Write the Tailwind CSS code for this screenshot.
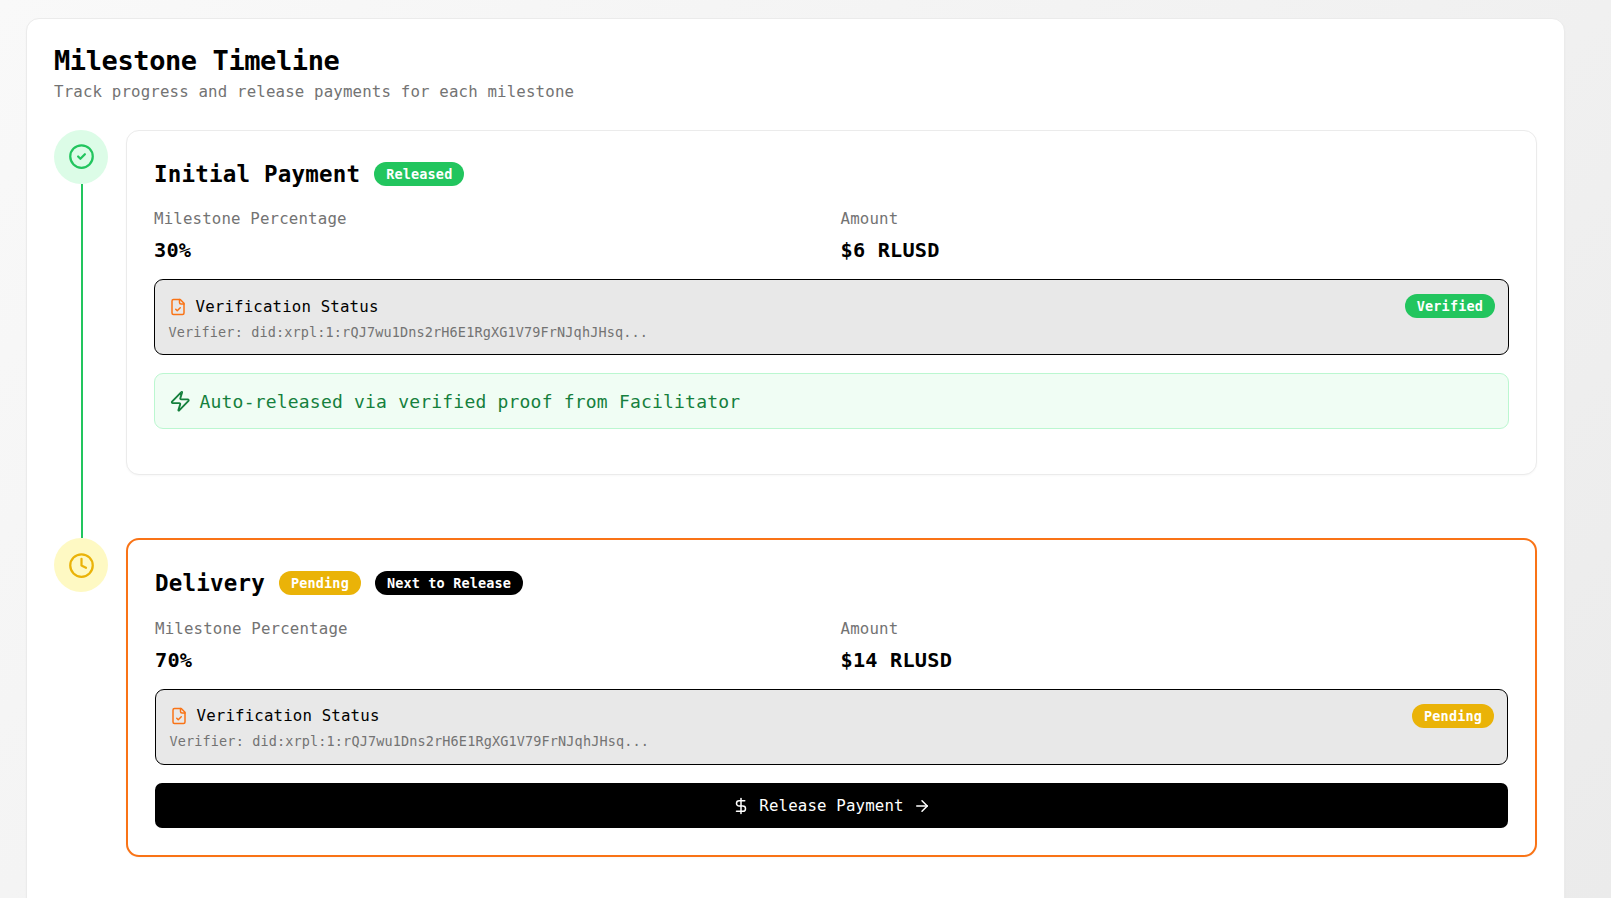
<!DOCTYPE html>
<html lang="en">

<head>
    <meta charset="UTF-8">
    <meta name="viewport" content="width=device-width, initial-scale=1.0">
    <title>Milestone Timeline</title>
    <script src="https://cdn.jsdelivr.net/npm/@tailwindcss/browser@4"></script>
</head>

<body class="h-screen overflow-hidden bg-[linear-gradient(135deg,#f9f9f9,#ebebeb)] font-['DejaVu_Sans_Mono',monospace] text-black">
    <div class="pl-[26px] pr-[46px] pt-[18px]">
        <!-- Outer card -->
        <section class="h-[1000px] rounded-[13px] border border-[#ebebeb] bg-white px-[27px] pt-[25px] shadow-[0_1px_2px_rgba(0,0,0,0.03)]">
            <h1 class="text-[27px] leading-[34px] font-bold tracking-[-0.4px]">Milestone Timeline</h1>
            <p class="mt-[2px] text-[15.75px] leading-[24px] tracking-[0.15px] text-[#737373]">Track progress and release payments for each milestone</p>

            <div class="mt-[26px] flex flex-col">
                <!-- Initial Payment -->
                <div class="flex gap-[18px] pb-[63px]">
                    <div class="flex w-[54px] shrink-0 flex-col items-center">
                        <div class="flex h-[54px] w-[54px] items-center justify-center rounded-full bg-[#dcfce7]">
                            <svg class="-mt-[1px] h-[27px] w-[27px] text-[#22c55e]" viewBox="0 0 24 24" fill="none" stroke="currentColor" stroke-width="2" stroke-linecap="round" stroke-linejoin="round"><circle cx="12" cy="12" r="10"/><path d="m9 12 2 2 4-4"/></svg>
                        </div>
                        <div class="-mb-[63px] ml-[2px] w-[2px] flex-1 bg-[#22c55e]"></div>
                    </div>
                    <div class="min-w-0 flex-1 rounded-[13px] border border-[#ebebeb] bg-white p-[27px] pb-[45px] shadow-[0_1px_2px_rgba(0,0,0,0.03)]">
                        <div class="flex items-center gap-[14px]">
                            <h2 class="text-[22.5px] leading-[32px] font-bold tracking-[0.2px]">Initial Payment</h2>
                            <span class="rounded-full bg-[#22c55e] px-[12px] py-[3px] text-[13.5px] leading-[18px] font-bold tracking-[0.15px] text-white">Released</span>
                        </div>
                        <div class="mt-[17px] grid grid-cols-2 gap-[18px]">
                            <div>
                                <p class="text-[15.75px] leading-[24px] tracking-[0.15px] text-[#737373]">Milestone Percentage</p>
                                <p class="mt-[5px] text-[20.25px] leading-[28px] font-bold tracking-[0.2px]">30%</p>
                            </div>
                            <div>
                                <p class="text-[15.75px] leading-[24px] tracking-[0.15px] text-[#737373]">Amount</p>
                                <p class="mt-[5px] text-[20.25px] leading-[28px] font-bold tracking-[0.2px]">$6 RLUSD</p>
                            </div>
                        </div>
                        <div class="mt-[15px] flex items-start justify-between rounded-[9px] border border-black bg-[#e8e8e8] pt-[15px] pr-[13px] pb-[12px] pl-[13.5px]">
                            <div>
                                <div class="flex items-center gap-[9px]">
                                    <svg class="h-[18px] w-[18px] text-[#f97316]" viewBox="0 0 24 24" fill="none" stroke="currentColor" stroke-width="2" stroke-linecap="round" stroke-linejoin="round"><path d="M15 2H6a2 2 0 0 0-2 2v16a2 2 0 0 0 2 2h12a2 2 0 0 0 2-2V7Z"/><path d="M14 2v4a2 2 0 0 0 2 2h4"/><path d="m9 15 2 2 4-4"/></svg>
                                    <span class="text-[15.75px] leading-[24px] tracking-[0.15px]">Verification Status</span>
                                </div>
                                <p class="mt-[3px] text-[13.5px] leading-[20px] tracking-[0.14px] text-[#737373]">Verifier: did:xrpl:1:rQJ7wu1Dns2rH6E1RgXG1V79FrNJqhJHsq...</p>
                            </div>
                            <span class="-mt-[1px] rounded-full bg-[#22c55e] px-[12px] py-[3px] text-[13.5px] leading-[18px] font-bold tracking-[0.15px] text-white">Verified</span>
                        </div>
                        <div class="mt-[18px] flex h-[56px] items-center gap-[8px] rounded-[9px] border border-[#bbf7d0] bg-[#f0fdf4] pr-[13px] pl-[14px] text-[18px] tracking-[0.2px] text-[#15803d]">
                            <svg class="h-[22.5px] w-[22.5px]" viewBox="0 0 24 24" fill="none" stroke="currentColor" stroke-width="2" stroke-linecap="round" stroke-linejoin="round"><path d="M4 14a1 1 0 0 1-.78-1.63l9.9-10.2a.5.5 0 0 1 .86.46l-1.92 6.02A1 1 0 0 0 13 10h7a1 1 0 0 1 .78 1.63l-9.9 10.2a.5.5 0 0 1-.86-.46l1.92-6.02A1 1 0 0 0 11 14z"/></svg>
                            <span>Auto-released via verified proof from Facilitator</span>
                        </div>
                    </div>
                </div>

                <!-- Delivery -->
                <div class="flex gap-[18px]">
                    <div class="flex w-[54px] shrink-0 flex-col items-center">
                        <div class="flex h-[54px] w-[54px] items-center justify-center rounded-full bg-[#fef9c3]">
                            <svg class="h-[27px] w-[27px] text-[#eab308]" viewBox="0 0 24 24" fill="none" stroke="currentColor" stroke-width="2" stroke-linecap="round" stroke-linejoin="round"><circle cx="12" cy="12" r="10"/><polyline points="12 6 12 12 16 14"/></svg>
                        </div>
                    </div>
                    <div class="min-w-0 flex-1 rounded-[13px] border-2 border-[#f97316] bg-white p-[27px] shadow-[0_1px_2px_rgba(0,0,0,0.03)]">
                        <div class="flex items-center gap-[14px]">
                            <h2 class="text-[22.5px] leading-[32px] font-bold tracking-[0.2px]">Delivery</h2>
                            <span class="rounded-full bg-[#eab308] px-[12px] py-[3px] text-[13.5px] leading-[18px] font-bold tracking-[0.15px] text-white">Pending</span>
                            <span class="rounded-full bg-black px-[12px] py-[3px] text-[13.5px] leading-[18px] font-bold tracking-[0.15px] text-white">Next to Release</span>
                        </div>
                        <div class="mt-[18px] grid grid-cols-2 gap-[18px]">
                            <div>
                                <p class="text-[15.75px] leading-[24px] tracking-[0.15px] text-[#737373]">Milestone Percentage</p>
                                <p class="mt-[5px] text-[20.25px] leading-[28px] font-bold tracking-[0.2px]">70%</p>
                            </div>
                            <div>
                                <p class="text-[15.75px] leading-[24px] tracking-[0.15px] text-[#737373]">Amount</p>
                                <p class="mt-[5px] text-[20.25px] leading-[28px] font-bold tracking-[0.2px]">$14 RLUSD</p>
                            </div>
                        </div>
                        <div class="mt-[15px] flex items-start justify-between rounded-[9px] border border-black bg-[#e8e8e8] pt-[14px] pr-[13px] pb-[13px] pl-[13.5px]">
                            <div>
                                <div class="flex items-center gap-[9px]">
                                    <svg class="h-[18px] w-[18px] text-[#f97316]" viewBox="0 0 24 24" fill="none" stroke="currentColor" stroke-width="2" stroke-linecap="round" stroke-linejoin="round"><path d="M15 2H6a2 2 0 0 0-2 2v16a2 2 0 0 0 2 2h12a2 2 0 0 0 2-2V7Z"/><path d="M14 2v4a2 2 0 0 0 2 2h4"/><path d="m9 15 2 2 4-4"/></svg>
                                    <span class="text-[15.75px] leading-[24px] tracking-[0.15px]">Verification Status</span>
                                </div>
                                <p class="mt-[3px] text-[13.5px] leading-[20px] tracking-[0.14px] text-[#737373]">Verifier: did:xrpl:1:rQJ7wu1Dns2rH6E1RgXG1V79FrNJqhJHsq...</p>
                            </div>
                            <span class="rounded-full bg-[#eab308] px-[12px] py-[3px] text-[13.5px] leading-[18px] font-bold tracking-[0.15px] text-white">Pending</span>
                        </div>
                        <button class="mt-[18px] flex h-[45px] w-full items-center justify-center gap-[9px] rounded-[7px] bg-black text-[15.75px] tracking-[0.15px] text-white">
                            <svg class="h-[18px] w-[18px]" viewBox="0 0 24 24" fill="none" stroke="currentColor" stroke-width="2" stroke-linecap="round" stroke-linejoin="round"><line x1="12" x2="12" y1="2" y2="22"/><path d="M17 5H9.5a3.5 3.5 0 0 0 0 7h5a3.5 3.5 0 0 1 0 7H6"/></svg>
                            <span>Release Payment</span>
                            <svg class="h-[18px] w-[18px]" viewBox="0 0 24 24" fill="none" stroke="currentColor" stroke-width="2" stroke-linecap="round" stroke-linejoin="round"><path d="M5 12h14"/><path d="m12 5 7 7-7 7"/></svg>
                        </button>
                    </div>
                </div>
            </div>
        </section>
    </div>
</body>

</html>
